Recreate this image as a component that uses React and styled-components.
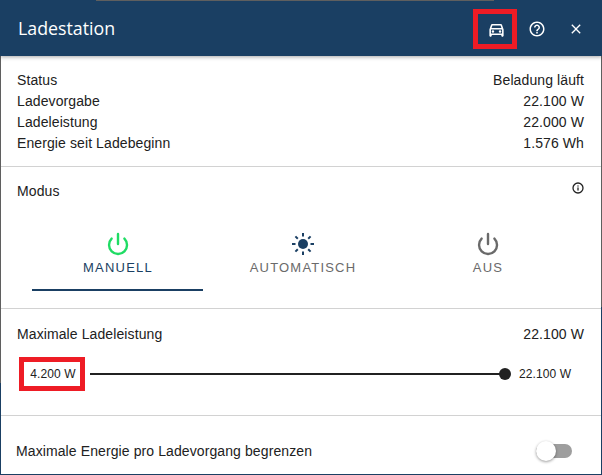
import React from "react";
import styled, { createGlobalStyle } from "styled-components";
import { Power, Info } from "lucide-react";
import { MdOutlineDirectionsCar, MdHelpOutline, MdClose } from "react-icons/md";

const navy = "#1a3f63";
const edge = "#5f5f5f";

const GlobalStyle = createGlobalStyle`
  html, body {
    margin: 0;
    padding: 0;
    background: #fff;
    overflow: hidden;
  }
`;

const Dialog = styled.div`
  width: 602px;
  height: 475px;
  box-sizing: border-box;
  padding: 0 1px 1px;
  background:
    linear-gradient(${edge} 383px, ${navy} 383px) left / 1px 100% no-repeat,
    linear-gradient(${edge} 307px, ${navy} 307px) right / 1px 100% no-repeat,
    linear-gradient(${navy}, ${navy}) bottom / 100% 1px no-repeat,
    #fff;
  font-family: "Liberation Sans", Arial, sans-serif;
  font-size: 14px;
  letter-spacing: 0.1px;
  color: #212121;
  overflow: hidden;
`;

const Header = styled.header`
  display: flex;
  align-items: center;
  height: 56px;
  margin: 0 -1px;
  padding-left: 18px;
  padding-right: 7px;
  background:
    linear-gradient(${edge}, ${edge}) 96px 0 / 398px 1px no-repeat,
    ${navy};
  color: #fff;
  box-shadow: 0 1px 4px rgba(0, 0, 0, 0.35);
  position: relative;
`;

const Title = styled.h1`
  flex: 1;
  margin: 0;
  font-family: "Open Sans", sans-serif;
  font-size: 17.8px;
  font-weight: 400;
  letter-spacing: 0;
  line-height: 58px;
`;

const HeaderActions = styled.div`
  display: flex;
  align-items: center;
`;

const IconButton = styled.button`
  display: flex;
  align-items: center;
  justify-content: center;
  box-sizing: border-box;
  width: ${(p) => (p.$marked ? "44px" : "39px")};
  height: ${(p) => (p.$marked ? "40px" : "39px")};
  margin-top: 2px;
  padding: ${(p) => (p.$marked ? "0 0 0 2px" : "0")};
  background: none;
  border: ${(p) => (p.$marked ? "5px solid #ee1c25" : "none")};
  color: #fff;
`;

const Section = styled.section`
  padding: ${(p) => p.$padding};
  height: ${(p) => p.$height};
  box-sizing: border-box;
  border-bottom: ${(p) => (p.$last ? "none" : "1px solid #d2d2d2")};
`;

const Row = styled.div`
  display: flex;
  justify-content: space-between;
  align-items: center;
  height: 21px;
  padding-right: ${(p) => p.$right || "17px"};
`;

const ModeHeading = styled(Row)`
  padding-right: 17px;
  height: 20px;
`;

const InfoMark = styled(Info)`
  width: 12px;
  height: 12px;
  margin-top: -6px;
  color: #222;
`;

const Tabs = styled.div`
  display: grid;
  grid-template-columns: repeat(3, 171px);
  column-gap: 14px;
  margin-top: 31px;
  margin-left: 15px;
`;

const Tab = styled.div`
  display: flex;
  flex-direction: column;
  align-items: center;
  height: 57px;
  border-bottom: 2px solid ${(p) => (p.$active ? navy : "transparent")};
  color: ${(p) => (p.$active ? navy : "#6a6a6a")};
  font-size: 13px;
  letter-spacing: 1.2px;
`;

const TabIcon = styled.div`
  display: flex;
  align-items: center;
  justify-content: center;
  height: 24px;
  color: ${(p) => p.$color};
`;

const TabLabel = styled.div`
  margin-top: 2px;
  padding-left: 1px;
  line-height: 20px;
`;

const SliderRow = styled.div`
  display: flex;
  align-items: center;
  margin-top: 13px;
  font-size: 12px;
`;

const MinLabel = styled.div`
  box-sizing: border-box;
  width: 66px;
  height: 34px;
  margin-left: 2px;
  padding-left: 2px;
  border: 5px solid #ee1c25;
  display: flex;
  align-items: center;
  justify-content: center;
`;

const Track = styled.div`
  display: flex;
  align-items: center;
  justify-content: flex-end;
  width: 415px;
  height: 2px;
  margin-left: 5px;
  background: #212121;
`;

const Thumb = styled.div`
  flex: none;
  width: 12px;
  height: 12px;
  margin-right: -6px;
  border-radius: 50%;
  background: #212121;
`;

const MaxLabel = styled.div`
  margin-left: 14px;
`;

const Switch = styled.div`
  display: flex;
  align-items: center;
  width: 36px;
  height: 14px;
  border-radius: 7px;
  background: #9e9e9e;
`;

const SwitchKnob = styled.div`
  width: 20px;
  height: 20px;
  border-radius: 50%;
  background: #fff;
  box-shadow: 0 1px 3px rgba(0, 0, 0, 0.4);
`;

const status = [
  ["Status", "Beladung läuft"],
  ["Ladevorgabe", "22.100 W"],
  ["Ladeleistung", "22.000 W"],
  ["Energie seit Ladebeginn", "1.576 Wh"],
];

function SunIcon() {
  return (
    <svg width="24" height="24" viewBox="0 0 24 24" fill="none" stroke="currentColor" strokeWidth="2">
      <circle cx="12" cy="12" r="5" fill="currentColor" stroke="none" />
      <path d="M12 1v3.5M12 19.5V23M1 12h3.5M19.5 12H23M4.4 4.4l2.4 2.4M17.2 17.2l2.4 2.4M4.4 19.6l2.4-2.4M17.2 6.8l2.4-2.4" />
    </svg>
  );
}

export default function App() {
  return (
    <>
      <GlobalStyle />
      <Dialog>
        <Header>
          <Title>Ladestation</Title>
          <HeaderActions>
            <IconButton $marked>
              <MdOutlineDirectionsCar size={19} />
            </IconButton>
            <IconButton>
              <MdHelpOutline size={18} />
            </IconButton>
            <IconButton>
              <MdClose size={16} />
            </IconButton>
          </HeaderActions>
        </Header>

        <Section $padding="13px 0 0 16px" $height="111px">
          {status.map(([label, value]) => (
            <Row key={label}>
              <span>{label}</span>
              <span>{value}</span>
            </Row>
          ))}
        </Section>

        <Section $padding="14px 0 0 16px" $height="142px">
          <ModeHeading>
            <span>Modus</span>
            <InfoMark strokeWidth={2.6} />
          </ModeHeading>
          <Tabs>
            <Tab $active>
              <TabIcon $color="#1fdc64">
                <Power size={24} strokeWidth={2.4} />
              </TabIcon>
              <TabLabel>MANUELL</TabLabel>
            </Tab>
            <Tab>
              <TabIcon $color={navy}>
                <SunIcon />
              </TabIcon>
              <TabLabel>AUTOMATISCH</TabLabel>
            </Tab>
            <Tab>
              <TabIcon $color="#6a6a6a">
                <Power size={24} strokeWidth={2.4} />
              </TabIcon>
              <TabLabel>AUS</TabLabel>
            </Tab>
          </Tabs>
        </Section>

        <Section $padding="14px 0 0 16px" $height="107px">
          <Row>
            <span>Maximale Ladeleistung</span>
            <span>22.100 W</span>
          </Row>
          <SliderRow>
            <MinLabel>4.200 W</MinLabel>
            <Track>
              <Thumb />
            </Track>
            <MaxLabel>22.100 W</MaxLabel>
          </SliderRow>
        </Section>

        <Section $padding="24px 0 0 15px" $height="58px" $last>
          <Row $right="29px">
            <span>Maximale Energie pro Ladevorgang begrenzen</span>
            <Switch>
              <SwitchKnob />
            </Switch>
          </Row>
        </Section>
      </Dialog>
    </>
  );
}
